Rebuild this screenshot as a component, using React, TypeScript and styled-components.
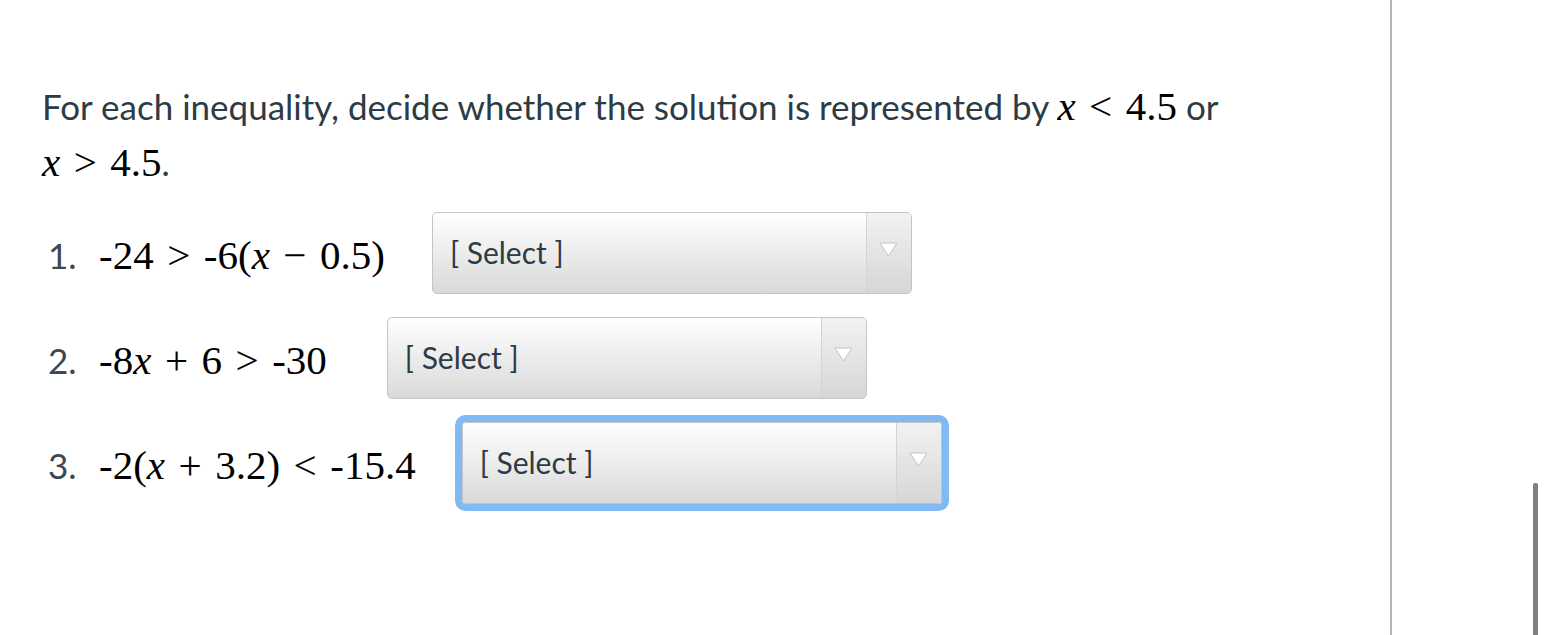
import React from "react";
import styled, { createGlobalStyle } from "styled-components";

const Global = createGlobalStyle`
  html, body { margin: 0; padding: 0; background: #fff; }
  body { font-family: Lato, "Open Sans", sans-serif; color: #2d3b45; }
`;

const Page = styled.div`
  display: flex;
  width: 1545px;
  height: 635px;
  overflow: hidden;
`;

const Main = styled.main`
  width: 1392px;
  flex-shrink: 0;
  border-right: 2px solid #b5b5b5;
  box-sizing: border-box;
  padding: 78px 0 0 42px;
`;

const Side = styled.aside`
  flex: 1;
  display: flex;
  justify-content: flex-end;
  align-items: flex-end;
  padding-right: 7px;
`;

const Thumb = styled.div`
  width: 5px;
  height: 152px;
  background: #808080;
  border-radius: 2px 2px 0 0;
`;

const Prompt = styled.p`
  margin: 0;
  font-size: 35px;
  line-height: 56px;
  color: #2d3b45;
  max-width: 1230px;
`;

const M = styled.span`
  font-family: "Liberation Serif", "DejaVu Serif", serif;
  font-size: 41px;
  color: #000;
  white-space: nowrap;
`;

const V = styled.i`
  font-family: "Liberation Serif", "DejaVu Serif", serif;
  font-style: italic;
`;

const Op = styled.span`
  margin: 0 0.33em;
`;

const List = styled.ol`
  list-style: none;
  margin: 22px 0 0 0;
  padding: 0 0 0 6px;
  display: flex;
  flex-direction: column;
  gap: 23px;
`;

const Item = styled.li<{ $gap: number }>`
  display: flex;
  align-items: center;
  gap: ${(p) => p.$gap}px;
  height: 82px;
`;

const Label = styled.div`
  display: flex;
  align-items: center;
  padding-top: 4px;
`;

const Num = styled.span`
  font-size: 35px;
  color: #3d4850;
  width: 51px;
`;

const SelectBox = styled.div<{ $focused?: boolean }>`
  width: 480px;
  height: 82px;
  box-sizing: border-box;
  display: flex;
  border: 1px solid #c4c4c4;
  background: linear-gradient(#ffffff, #d9d9d9);
  box-shadow: ${(p) => (p.$focused ? "0 0 0 7px #80b9f3" : "none")};
  border-radius: ${(p) => (p.$focused ? "4px" : "5px")};
`;

const SelectText = styled.span`
  flex: 1;
  display: flex;
  align-items: center;
  padding-left: 17px;
  padding-bottom: 2px;
  font-size: 30px;
  color: #2d3b45;
`;

const Arrow = styled.div`
  width: 45px;
  border-left: 1px solid #d3d3d3;
  display: flex;
  justify-content: center;
  padding-top: 29px;
  box-sizing: border-box;
  background: linear-gradient(#f2f2f2, #d6d6d6);
  border-radius: 0 4px 4px 0;
`;

const Select = ({ focused }: { focused?: boolean }) => (
  <SelectBox $focused={focused}>
    <SelectText>[ Select ]</SelectText>
    <Arrow>
      <svg width="19" height="15" viewBox="0 0 19 15">
        <polygon points="1,1 18,1 9.5,14" fill="#ffffff" stroke="#c4c4c4" strokeWidth="1" strokeLinejoin="round" />
      </svg>
    </Arrow>
  </SelectBox>
);

export default function App() {
  return (
    <>
      <Global />
      <Page>
        <Main>
          <Prompt>
            For each inequality, decide whether the solution is represented by{" "}
            <M>
              <V>x</V>
              <Op>&lt;</Op>4.5
            </M>{" "}
            or{" "}
            <M>
              <V>x</V>
              <Op>&gt;</Op>4.5
            </M>
            .
          </Prompt>
          <List>
            <Item $gap={47}>
              <Label>
                <Num>1.</Num>
                <M>
                  -24<Op>&gt;</Op>-6(<V>x</V>
                  <Op>−</Op>0.5)
                </M>
              </Label>
              <Select />
            </Item>
            <Item $gap={60}>
              <Label>
                <Num>2.</Num>
                <M>
                  -8<V>x</V>
                  <Op>+</Op>6<Op>&gt;</Op>-30
                </M>
              </Label>
              <Select />
            </Item>
            <Item $gap={46}>
              <Label>
                <Num>3.</Num>
                <M>
                  -2(<V>x</V>
                  <Op>+</Op>3.2)<Op>&lt;</Op>-15.4
                </M>
              </Label>
              <Select focused />
            </Item>
          </List>
        </Main>
        <Side>
          <Thumb />
        </Side>
      </Page>
    </>
  );
}
